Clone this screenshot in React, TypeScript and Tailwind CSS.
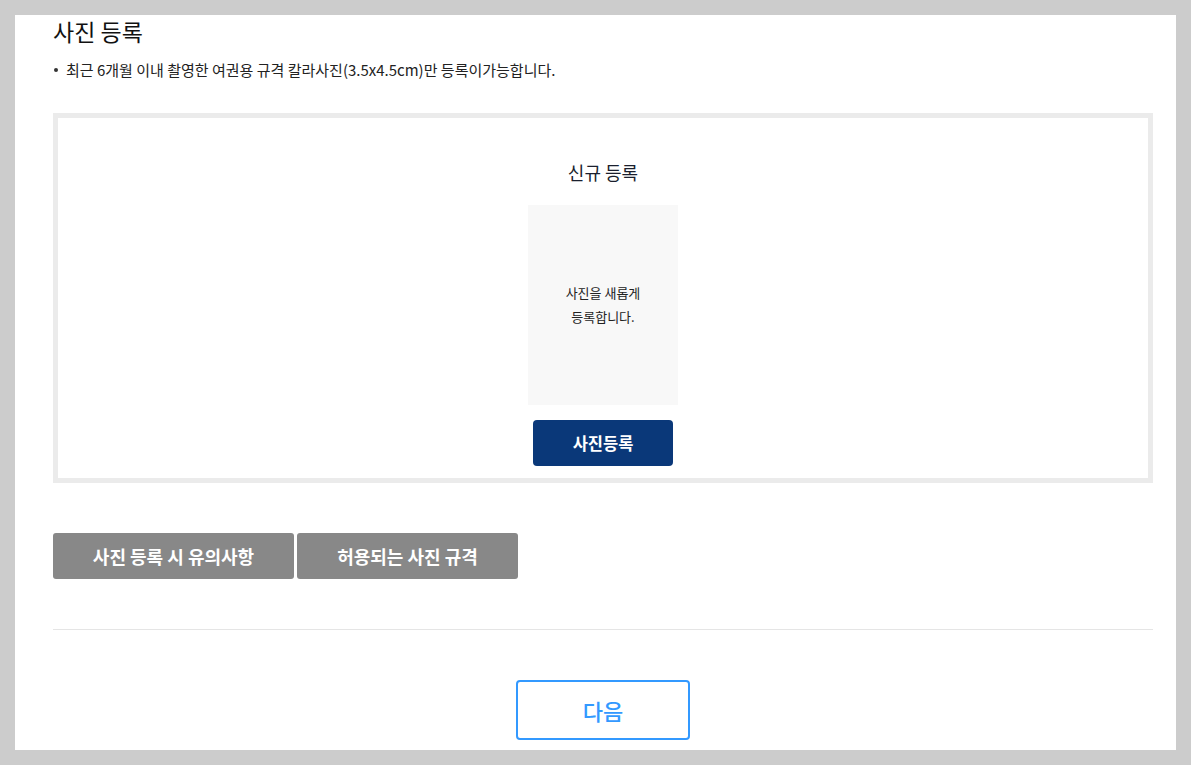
import React from "react";

export default function App() {
  return (
    <div
      className="w-[1191px] h-[765px] bg-[#cccccc] p-[15px]"
      style={{ fontFamily: '"Noto Sans CJK KR", "Noto Sans", sans-serif' }}
    >
      <div className="w-[1161px] h-[735px] bg-white pl-[38px] pr-[23px] pt-[4px] overflow-hidden">
        <h2 className="text-[23px] leading-[24px] text-[#111]">사진 등록</h2>
        <ul className="mt-[17px]">
          <li className="flex items-center text-[15px] leading-[20px] text-[#222]">
            <span className="w-[4px] h-[4px] rounded-full bg-[#333] mr-[8px] ml-[1px]"></span>
            최근 6개월 이내 촬영한 여권용 규격 칼라사진(3.5x4.5cm)만 등록이가능합니다.
          </li>
        </ul>
        <div className="mt-[33px] h-[370px] border-[5px] border-[#ebebeb] flex flex-col items-center">
          <div className="mt-[43px] text-[18px] leading-[22px] text-[#1a1f2e]">신규 등록</div>
          <div className="mt-[22px] w-[150px] h-[200px] bg-[#f8f8f8] flex items-center justify-center text-center text-[13px] leading-[24px] text-[#222]">
            <div>
              사진을 새롭게
              <br />
              등록합니다.
            </div>
          </div>
          <button className="mt-[15px] w-[140px] h-[46px] rounded-[4px] bg-[#0a3879] text-white text-[16.5px] font-bold">
            사진등록
          </button>
        </div>
        <div className="mt-[50px] flex gap-[3px]">
          <button className="w-[241px] h-[46px] rounded-[3px] bg-[#888888] text-white text-[18px] font-bold">
            사진 등록 시 유의사항
          </button>
          <button className="w-[221px] h-[46px] rounded-[3px] bg-[#888888] text-white text-[18px] font-bold">
            허용되는 사진 규격
          </button>
        </div>
        <div className="mt-[50px] h-px bg-[#e5e5e5]"></div>
        <div className="mt-[50px] flex justify-center">
          <button className="w-[174px] h-[60px] rounded-[4px] border-2 border-[#3399ff] text-[#3399ff] text-[22px] font-medium">
            다음
          </button>
        </div>
      </div>
    </div>
  );
}
